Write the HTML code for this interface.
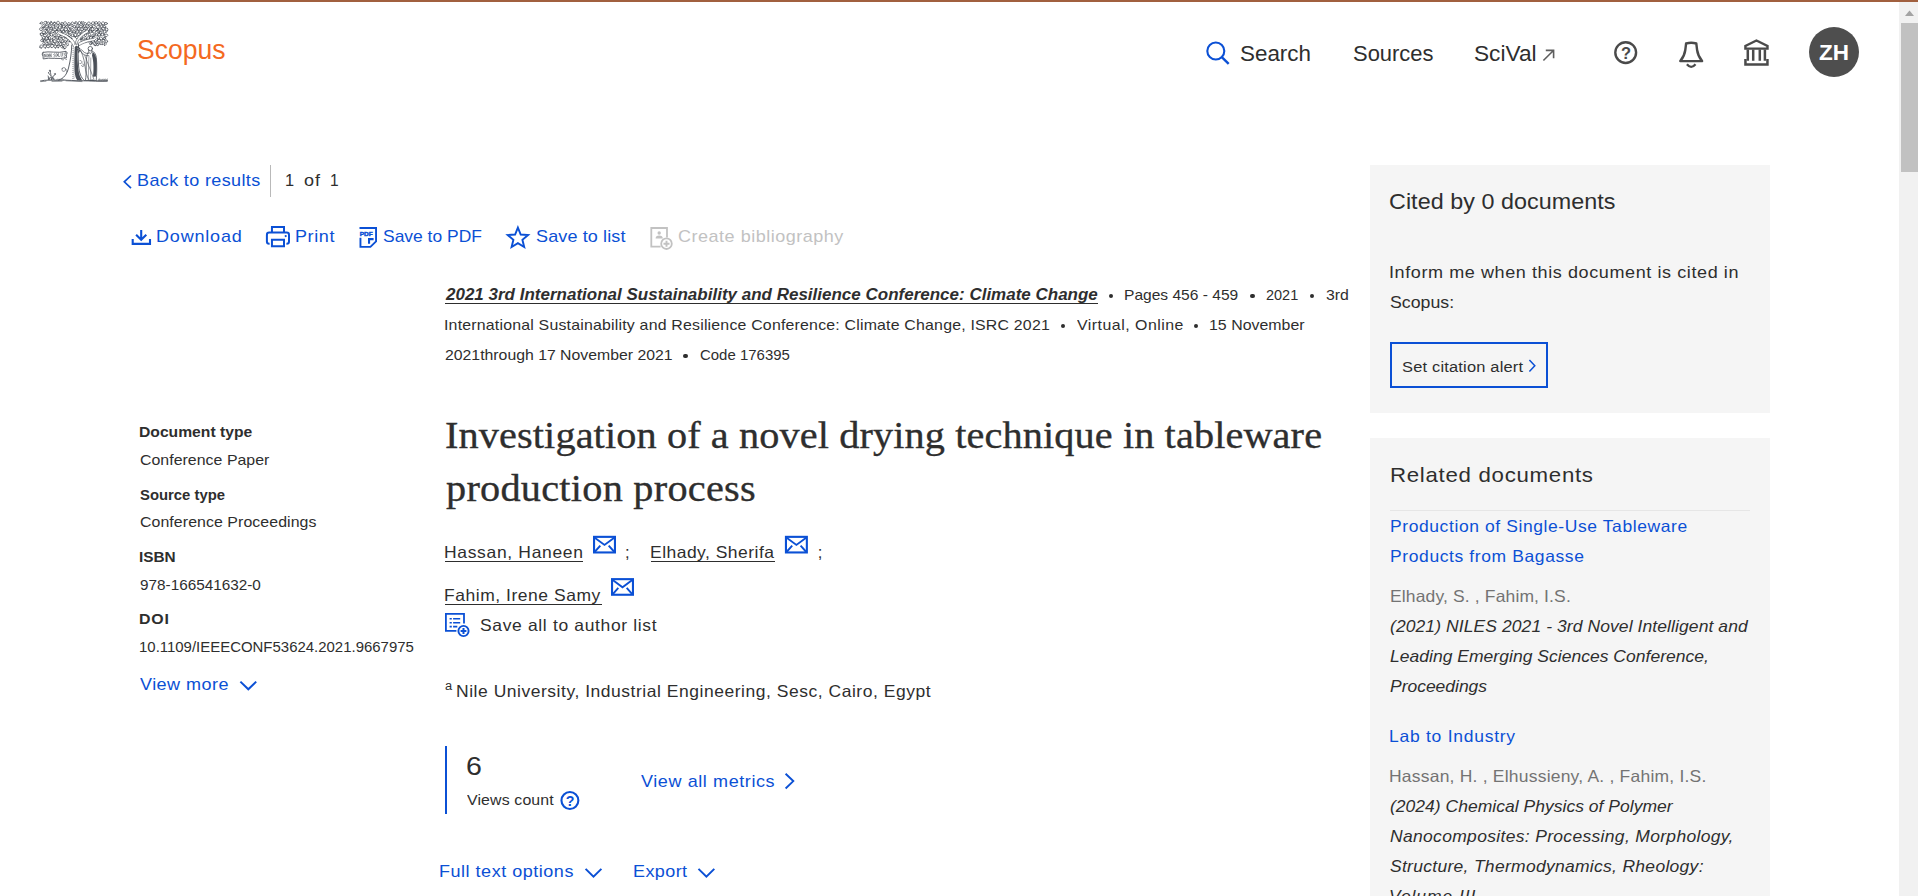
<!DOCTYPE html>
<html lang="en">
<head>
<meta charset="utf-8">
<title>Scopus - Document details</title>
<style>
html,body{margin:0;padding:0;background:#fff;}
body{width:1918px;height:896px;position:relative;overflow:hidden;font-family:"Liberation Sans",sans-serif;}
.t{position:absolute;white-space:pre;display:block;transform-origin:0 0;}
.s{font-family:"Liberation Sans",sans-serif;}
.sf{font-family:"Liberation Serif",serif;}
.b{position:absolute;display:block;}
svg{position:absolute;overflow:visible;}
.dot{position:absolute;width:4.4px;height:4.4px;border-radius:50%;background:#2e2e2e;}
.ul{position:absolute;height:1px;background:#2e2e2e;}
</style>
</head>
<body>
<!-- top accent bar -->
<div class="b" style="left:0;top:0;width:1918px;height:2px;background:#a1603f;"></div>

<!-- scrollbar -->
<div class="b" style="left:1899px;top:2px;width:19px;height:894px;background:#f1f1f1;"></div>
<div class="b" style="left:1901px;top:23px;width:17px;height:149px;background:#c1c1c1;"></div>
<svg style="left:1899px;top:2px" width="19" height="20" viewBox="0 0 19 20"><path d="M6 14 L10.5 8.6 L15 14 Z" fill="#a3a3a3"/></svg>

<!-- right panels -->
<div class="b" style="left:1370px;top:165px;width:400px;height:248px;background:#f5f5f5;"></div>
<div class="b" style="left:1370px;top:438px;width:400px;height:458px;background:#f5f5f5;"></div>
<div class="b" style="left:1390px;top:510px;width:360px;height:1px;background:#e6e6e6;"></div>
<div class="b" style="left:1390px;top:342px;width:154px;height:42px;border:2px solid #0b50d5;"></div>

<!-- back row divider -->
<div class="b" style="left:270px;top:165px;width:1px;height:32px;background:#b9b9b9;"></div>

<!-- metrics bar -->
<div class="b" style="left:445px;top:746px;width:2px;height:68px;background:#0b50d5;"></div>

<!-- underlines -->
<div class="ul" style="left:444.5px;top:302.7px;width:653.5px;height:1.4px;"></div>
<div class="ul" style="left:444.5px;top:561px;width:138.5px;"></div>
<div class="ul" style="left:650.7px;top:561px;width:124.6px;"></div>
<div class="ul" style="left:444.5px;top:604px;width:157px;"></div>

<!-- bullets -->
<div class="dot" style="left:1108.9px;top:293.7px;"></div>
<div class="dot" style="left:1250.4px;top:293.7px;"></div>
<div class="dot" style="left:1309.7px;top:293.7px;"></div>
<div class="dot" style="left:1061.0px;top:323.7px;"></div>
<div class="dot" style="left:1194.1px;top:323.7px;"></div>
<div class="dot" style="left:683.2px;top:353.6px;"></div>

<!-- avatar -->
<div class="b" style="left:1809px;top:27px;width:50px;height:50px;border-radius:50%;background:#4e4e4e;"></div>

<svg style="left:0;top:0" width="120" height="90" viewBox="0 0 120 90" fill="none" stroke="#4b5058" stroke-linecap="round" stroke-linejoin="round">
<ellipse cx="41.4" cy="23.0" rx="1.4" ry="1.0" transform="rotate(154 41.4 23.0)" stroke-width="0.66"/>
<ellipse cx="45.2" cy="22.9" rx="1.5" ry="1.3" transform="rotate(61 45.2 22.9)" stroke-width="0.66"/>
<ellipse cx="48.4" cy="23.2" rx="1.5" ry="1.2" transform="rotate(23 48.4 23.2)" stroke-width="0.66"/>
<path d="M47.2 22.2 l-1.0 -0.7" stroke-width="0.95"/>
<ellipse cx="51.3" cy="23.4" rx="1.5" ry="1.3" transform="rotate(55 51.3 23.4)" stroke-width="0.66"/>
<path d="M51.3 22.4 l-0.3 -1.1" stroke-width="0.95"/>
<ellipse cx="54.6" cy="23.3" rx="1.5" ry="1.3" transform="rotate(3 54.6 23.3)" stroke-width="0.66"/>
<path d="M53.7 23.2 l1.0 -0.9" stroke-width="0.95"/>
<ellipse cx="58.1" cy="22.9" rx="1.7" ry="1.4" transform="rotate(78 58.1 22.9)" stroke-width="0.66"/>
<ellipse cx="61.9" cy="23.8" rx="1.5" ry="1.3" transform="rotate(91 61.9 23.8)" stroke-width="0.66"/>
<ellipse cx="64.9" cy="23.1" rx="1.5" ry="1.3" transform="rotate(150 64.9 23.1)" stroke-width="0.66"/>
<ellipse cx="69.0" cy="23.9" rx="1.5" ry="1.1" transform="rotate(63 69.0 23.9)" stroke-width="0.66"/>
<path d="M67.6 24.7 l-0.5 -0.7" stroke-width="0.95"/>
<ellipse cx="72.3" cy="23.3" rx="1.4" ry="1.3" transform="rotate(151 72.3 23.3)" stroke-width="0.66"/>
<ellipse cx="76.2" cy="22.9" rx="1.5" ry="1.1" transform="rotate(44 76.2 22.9)" stroke-width="0.66"/>
<path d="M75.1 22.7 l-0.5 1.0" stroke-width="0.95"/>
<ellipse cx="79.4" cy="23.1" rx="1.7" ry="1.3" transform="rotate(98 79.4 23.1)" stroke-width="0.66"/>
<ellipse cx="82.0" cy="22.9" rx="1.5" ry="1.0" transform="rotate(64 82.0 22.9)" stroke-width="0.66"/>
<path d="M81.9 23.0 l-0.7 0.0" stroke-width="0.95"/>
<ellipse cx="85.6" cy="23.8" rx="1.4" ry="1.0" transform="rotate(48 85.6 23.8)" stroke-width="0.66"/>
<path d="M84.1 22.3 l-0.4 -0.6" stroke-width="0.95"/>
<ellipse cx="88.8" cy="23.5" rx="1.6" ry="1.4" transform="rotate(95 88.8 23.5)" stroke-width="0.66"/>
<ellipse cx="92.8" cy="23.2" rx="1.6" ry="1.3" transform="rotate(158 92.8 23.2)" stroke-width="0.66"/>
<path d="M94.3 22.1 l0.5 0.3" stroke-width="0.95"/>
<ellipse cx="96.1" cy="22.9" rx="1.4" ry="1.3" transform="rotate(150 96.1 22.9)" stroke-width="0.66"/>
<ellipse cx="98.9" cy="23.0" rx="1.6" ry="1.2" transform="rotate(146 98.9 23.0)" stroke-width="0.66"/>
<path d="M98.9 24.1 l0.7 0.7" stroke-width="0.95"/>
<ellipse cx="103.0" cy="23.3" rx="1.6" ry="1.4" transform="rotate(161 103.0 23.3)" stroke-width="0.66"/>
<ellipse cx="106.0" cy="23.5" rx="1.4" ry="1.1" transform="rotate(6 106.0 23.5)" stroke-width="0.66"/>
<path d="M104.7 24.6 l0.1 0.3" stroke-width="0.95"/>
<ellipse cx="43.2" cy="26.1" rx="1.6" ry="1.3" transform="rotate(123 43.2 26.1)" stroke-width="0.66"/>
<path d="M44.2 26.9 l0.0 0.1" stroke-width="0.95"/>
<ellipse cx="47.1" cy="26.5" rx="1.6" ry="1.4" transform="rotate(12 47.1 26.5)" stroke-width="0.66"/>
<path d="M45.7 25.8 l0.5 -0.6" stroke-width="0.95"/>
<ellipse cx="49.8" cy="26.4" rx="1.6" ry="1.4" transform="rotate(176 49.8 26.4)" stroke-width="0.66"/>
<path d="M49.7 27.0 l0.6 0.3" stroke-width="0.95"/>
<ellipse cx="53.5" cy="26.8" rx="1.6" ry="1.2" transform="rotate(14 53.5 26.8)" stroke-width="0.66"/>
<path d="M54.3 26.1 l0.1 -1.1" stroke-width="0.95"/>
<ellipse cx="57.2" cy="26.0" rx="1.4" ry="1.2" transform="rotate(48 57.2 26.0)" stroke-width="0.66"/>
<ellipse cx="60.9" cy="25.8" rx="1.6" ry="1.3" transform="rotate(52 60.9 25.8)" stroke-width="0.66"/>
<path d="M60.8 24.6 l0.9 -0.7" stroke-width="0.95"/>
<ellipse cx="63.6" cy="26.6" rx="1.7" ry="1.2" transform="rotate(169 63.6 26.6)" stroke-width="0.66"/>
<path d="M64.6 28.1 l-0.1 -0.5" stroke-width="0.95"/>
<ellipse cx="66.7" cy="26.3" rx="1.4" ry="1.1" transform="rotate(170 66.7 26.3)" stroke-width="0.66"/>
<path d="M65.5 26.4 l1.0 -0.8" stroke-width="0.95"/>
<ellipse cx="69.9" cy="26.5" rx="1.7" ry="1.5" transform="rotate(92 69.9 26.5)" stroke-width="0.66"/>
<ellipse cx="74.2" cy="26.4" rx="1.4" ry="1.2" transform="rotate(162 74.2 26.4)" stroke-width="0.66"/>
<path d="M72.6 26.4 l-0.1 -0.4" stroke-width="0.95"/>
<ellipse cx="77.8" cy="26.1" rx="1.4" ry="1.1" transform="rotate(62 77.8 26.1)" stroke-width="0.66"/>
<ellipse cx="80.9" cy="26.4" rx="1.4" ry="1.2" transform="rotate(135 80.9 26.4)" stroke-width="0.66"/>
<path d="M82.3 27.1 l0.9 -0.5" stroke-width="0.95"/>
<ellipse cx="84.2" cy="26.2" rx="1.5" ry="1.4" transform="rotate(71 84.2 26.2)" stroke-width="0.66"/>
<path d="M83.8 26.0 l-0.5 -1.0" stroke-width="0.95"/>
<ellipse cx="87.9" cy="26.8" rx="1.4" ry="1.1" transform="rotate(150 87.9 26.8)" stroke-width="0.66"/>
<ellipse cx="90.9" cy="26.5" rx="1.4" ry="1.2" transform="rotate(48 90.9 26.5)" stroke-width="0.66"/>
<path d="M90.5 28.0 l0.8 0.7" stroke-width="0.95"/>
<ellipse cx="93.8" cy="26.5" rx="1.6" ry="1.5" transform="rotate(164 93.8 26.5)" stroke-width="0.66"/>
<path d="M94.5 25.1 l0.5 -0.1" stroke-width="0.95"/>
<ellipse cx="97.9" cy="26.9" rx="1.7" ry="1.3" transform="rotate(116 97.9 26.9)" stroke-width="0.66"/>
<path d="M99.2 25.7 l-0.1 -0.3" stroke-width="0.95"/>
<ellipse cx="101.5" cy="26.0" rx="1.5" ry="1.4" transform="rotate(133 101.5 26.0)" stroke-width="0.66"/>
<path d="M102.0 25.4 l0.1 -0.2" stroke-width="0.95"/>
<ellipse cx="104.4" cy="26.5" rx="1.4" ry="1.1" transform="rotate(29 104.4 26.5)" stroke-width="0.66"/>
<ellipse cx="41.0" cy="29.2" rx="1.5" ry="1.4" transform="rotate(40 41.0 29.2)" stroke-width="0.66"/>
<ellipse cx="44.6" cy="28.7" rx="1.5" ry="1.1" transform="rotate(25 44.6 28.7)" stroke-width="0.66"/>
<path d="M44.1 27.4 l-0.6 -0.5" stroke-width="0.95"/>
<ellipse cx="47.9" cy="29.5" rx="1.6" ry="1.4" transform="rotate(160 47.9 29.5)" stroke-width="0.66"/>
<path d="M47.6 29.6 l-0.3 -0.4" stroke-width="0.95"/>
<ellipse cx="51.4" cy="28.9" rx="1.4" ry="1.3" transform="rotate(50 51.4 28.9)" stroke-width="0.66"/>
<path d="M51.4 29.3 l0.8 -0.6" stroke-width="0.95"/>
<ellipse cx="55.1" cy="29.6" rx="1.5" ry="1.2" transform="rotate(45 55.1 29.6)" stroke-width="0.66"/>
<path d="M56.5 30.8 l0.8 -1.1" stroke-width="0.95"/>
<ellipse cx="58.1" cy="29.1" rx="1.4" ry="1.3" transform="rotate(128 58.1 29.1)" stroke-width="0.66"/>
<path d="M58.4 27.5 l-0.2 0.9" stroke-width="0.95"/>
<ellipse cx="62.1" cy="29.7" rx="1.7" ry="1.6" transform="rotate(154 62.1 29.7)" stroke-width="0.66"/>
<path d="M60.8 28.6 l0.0 0.4" stroke-width="0.95"/>
<ellipse cx="65.8" cy="29.6" rx="1.7" ry="1.5" transform="rotate(130 65.8 29.6)" stroke-width="0.66"/>
<ellipse cx="68.5" cy="29.1" rx="1.5" ry="1.1" transform="rotate(99 68.5 29.1)" stroke-width="0.66"/>
<ellipse cx="72.0" cy="29.7" rx="1.4" ry="1.2" transform="rotate(166 72.0 29.7)" stroke-width="0.66"/>
<path d="M70.8 28.9 l0.3 0.4" stroke-width="0.95"/>
<ellipse cx="76.1" cy="28.8" rx="1.4" ry="1.2" transform="rotate(13 76.1 28.8)" stroke-width="0.66"/>
<path d="M75.8 27.9 l0.2 -1.1" stroke-width="0.95"/>
<ellipse cx="78.6" cy="28.9" rx="1.5" ry="1.4" transform="rotate(83 78.6 28.9)" stroke-width="0.66"/>
<ellipse cx="82.1" cy="29.2" rx="1.7" ry="1.3" transform="rotate(86 82.1 29.2)" stroke-width="0.66"/>
<path d="M83.6 29.8 l-0.4 -1.1" stroke-width="0.95"/>
<ellipse cx="85.9" cy="28.9" rx="1.5" ry="1.2" transform="rotate(121 85.9 28.9)" stroke-width="0.66"/>
<path d="M86.4 30.3 l-0.6 -1.0" stroke-width="0.95"/>
<ellipse cx="88.6" cy="29.1" rx="1.5" ry="1.3" transform="rotate(76 88.6 29.1)" stroke-width="0.66"/>
<path d="M89.6 29.9 l0.0 -0.6" stroke-width="0.95"/>
<ellipse cx="92.4" cy="29.3" rx="1.7" ry="1.6" transform="rotate(56 92.4 29.3)" stroke-width="0.66"/>
<path d="M91.6 30.1 l-0.5 1.0" stroke-width="0.95"/>
<ellipse cx="96.5" cy="29.4" rx="1.5" ry="1.2" transform="rotate(34 96.5 29.4)" stroke-width="0.66"/>
<path d="M97.1 30.9 l-0.8 -0.2" stroke-width="0.95"/>
<ellipse cx="99.4" cy="29.3" rx="1.4" ry="1.1" transform="rotate(175 99.4 29.3)" stroke-width="0.66"/>
<path d="M98.0 29.0 l0.9 0.8" stroke-width="0.95"/>
<ellipse cx="103.0" cy="28.7" rx="1.6" ry="1.5" transform="rotate(180 103.0 28.7)" stroke-width="0.66"/>
<path d="M102.0 30.1 l0.5 -1.0" stroke-width="0.95"/>
<ellipse cx="106.7" cy="29.5" rx="1.6" ry="1.3" transform="rotate(68 106.7 29.5)" stroke-width="0.66"/>
<path d="M105.6 27.9 l-0.5 -0.3" stroke-width="0.95"/>
<ellipse cx="43.7" cy="32.5" rx="1.7" ry="1.6" transform="rotate(22 43.7 32.5)" stroke-width="0.66"/>
<path d="M43.3 33.5 l0.7 -0.1" stroke-width="0.95"/>
<ellipse cx="46.6" cy="32.0" rx="1.4" ry="1.1" transform="rotate(85 46.6 32.0)" stroke-width="0.66"/>
<ellipse cx="49.6" cy="32.3" rx="1.4" ry="1.3" transform="rotate(66 49.6 32.3)" stroke-width="0.66"/>
<path d="M49.3 33.3 l0.6 -1.0" stroke-width="0.95"/>
<ellipse cx="53.0" cy="31.6" rx="1.4" ry="1.3" transform="rotate(11 53.0 31.6)" stroke-width="0.66"/>
<path d="M53.8 32.9 l-0.4 -0.5" stroke-width="0.95"/>
<ellipse cx="56.6" cy="31.7" rx="1.7" ry="1.3" transform="rotate(111 56.6 31.7)" stroke-width="0.66"/>
<ellipse cx="60.1" cy="31.6" rx="1.5" ry="1.0" transform="rotate(50 60.1 31.6)" stroke-width="0.66"/>
<ellipse cx="63.1" cy="31.7" rx="1.7" ry="1.6" transform="rotate(114 63.1 31.7)" stroke-width="0.66"/>
<path d="M62.2 31.6 l1.0 1.0" stroke-width="0.95"/>
<ellipse cx="66.6" cy="31.9" rx="1.5" ry="1.2" transform="rotate(45 66.6 31.9)" stroke-width="0.66"/>
<path d="M68.0 30.9 l0.7 0.5" stroke-width="0.95"/>
<ellipse cx="69.9" cy="32.5" rx="1.7" ry="1.4" transform="rotate(139 69.9 32.5)" stroke-width="0.66"/>
<path d="M69.4 32.1 l0.6 -0.9" stroke-width="0.95"/>
<ellipse cx="74.0" cy="31.7" rx="1.4" ry="1.1" transform="rotate(136 74.0 31.7)" stroke-width="0.66"/>
<path d="M72.5 31.8 l-0.4 1.1" stroke-width="0.95"/>
<ellipse cx="77.0" cy="31.9" rx="1.7" ry="1.3" transform="rotate(178 77.0 31.9)" stroke-width="0.66"/>
<path d="M75.7 31.9 l0.5 -0.1" stroke-width="0.95"/>
<ellipse cx="80.5" cy="31.6" rx="1.4" ry="1.2" transform="rotate(75 80.5 31.6)" stroke-width="0.66"/>
<ellipse cx="84.5" cy="32.7" rx="1.6" ry="1.4" transform="rotate(152 84.5 32.7)" stroke-width="0.66"/>
<path d="M85.6 32.0 l0.1 -0.3" stroke-width="0.95"/>
<ellipse cx="87.5" cy="32.1" rx="1.6" ry="1.3" transform="rotate(36 87.5 32.1)" stroke-width="0.66"/>
<path d="M86.3 33.3 l0.2 -0.4" stroke-width="0.95"/>
<ellipse cx="90.4" cy="31.6" rx="1.5" ry="1.2" transform="rotate(179 90.4 31.6)" stroke-width="0.66"/>
<path d="M91.4 32.1 l1.1 -0.9" stroke-width="0.95"/>
<ellipse cx="94.1" cy="31.8" rx="1.5" ry="1.4" transform="rotate(147 94.1 31.8)" stroke-width="0.66"/>
<ellipse cx="98.1" cy="31.7" rx="1.4" ry="1.0" transform="rotate(53 98.1 31.7)" stroke-width="0.66"/>
<path d="M99.6 32.0 l0.9 -0.3" stroke-width="0.95"/>
<ellipse cx="100.5" cy="32.6" rx="1.7" ry="1.3" transform="rotate(81 100.5 32.6)" stroke-width="0.66"/>
<ellipse cx="104.5" cy="31.7" rx="1.7" ry="1.5" transform="rotate(19 104.5 31.7)" stroke-width="0.66"/>
<path d="M103.6 31.3 l-0.8 -0.7" stroke-width="0.95"/>
<ellipse cx="41.7" cy="34.4" rx="1.5" ry="1.3" transform="rotate(108 41.7 34.4)" stroke-width="0.66"/>
<path d="M40.1 33.9 l0.4 -0.7" stroke-width="0.95"/>
<ellipse cx="45.0" cy="35.6" rx="1.5" ry="1.3" transform="rotate(37 45.0 35.6)" stroke-width="0.66"/>
<path d="M43.6 34.3 l-0.2 0.1" stroke-width="0.95"/>
<ellipse cx="48.8" cy="35.2" rx="1.6" ry="1.2" transform="rotate(16 48.8 35.2)" stroke-width="0.66"/>
<ellipse cx="51.5" cy="34.8" rx="1.5" ry="1.2" transform="rotate(51 51.5 34.8)" stroke-width="0.66"/>
<ellipse cx="54.8" cy="35.3" rx="1.5" ry="1.2" transform="rotate(102 54.8 35.3)" stroke-width="0.66"/>
<path d="M56.0 36.9 l-0.3 -0.7" stroke-width="0.95"/>
<ellipse cx="58.6" cy="35.3" rx="1.6" ry="1.2" transform="rotate(37 58.6 35.3)" stroke-width="0.66"/>
<ellipse cx="61.8" cy="34.7" rx="1.5" ry="1.2" transform="rotate(148 61.8 34.7)" stroke-width="0.66"/>
<ellipse cx="65.8" cy="35.6" rx="1.5" ry="1.1" transform="rotate(29 65.8 35.6)" stroke-width="0.66"/>
<path d="M66.2 36.9 l-0.9 0.3" stroke-width="0.95"/>
<ellipse cx="69.2" cy="35.4" rx="1.5" ry="1.1" transform="rotate(91 69.2 35.4)" stroke-width="0.66"/>
<path d="M69.3 36.7 l-0.9 -0.0" stroke-width="0.95"/>
<ellipse cx="72.6" cy="35.3" rx="1.7" ry="1.3" transform="rotate(174 72.6 35.3)" stroke-width="0.66"/>
<path d="M74.0 36.8 l-0.0 -1.0" stroke-width="0.95"/>
<ellipse cx="75.3" cy="35.0" rx="1.7" ry="1.6" transform="rotate(70 75.3 35.0)" stroke-width="0.66"/>
<ellipse cx="78.8" cy="34.4" rx="1.7" ry="1.5" transform="rotate(29 78.8 34.4)" stroke-width="0.66"/>
<path d="M78.5 35.5 l0.7 -0.7" stroke-width="0.95"/>
<ellipse cx="81.8" cy="34.7" rx="1.4" ry="1.2" transform="rotate(72 81.8 34.7)" stroke-width="0.66"/>
<path d="M80.6 33.9 l0.5 0.9" stroke-width="0.95"/>
<ellipse cx="85.5" cy="35.2" rx="1.4" ry="1.2" transform="rotate(101 85.5 35.2)" stroke-width="0.66"/>
<path d="M86.6 34.0 l0.2 0.1" stroke-width="0.95"/>
<ellipse cx="89.7" cy="34.9" rx="1.6" ry="1.3" transform="rotate(55 89.7 34.9)" stroke-width="0.66"/>
<path d="M89.5 35.4 l-0.1 -0.1" stroke-width="0.95"/>
<ellipse cx="93.1" cy="35.6" rx="1.4" ry="1.1" transform="rotate(111 93.1 35.6)" stroke-width="0.66"/>
<path d="M94.0 36.5 l-0.1 -0.7" stroke-width="0.95"/>
<ellipse cx="96.5" cy="34.8" rx="1.5" ry="1.1" transform="rotate(19 96.5 34.8)" stroke-width="0.66"/>
<path d="M95.2 34.7 l0.0 -1.0" stroke-width="0.95"/>
<ellipse cx="99.1" cy="34.7" rx="1.6" ry="1.4" transform="rotate(15 99.1 34.7)" stroke-width="0.66"/>
<ellipse cx="102.4" cy="34.6" rx="1.6" ry="1.3" transform="rotate(10 102.4 34.6)" stroke-width="0.66"/>
<path d="M103.9 33.5 l0.8 1.1" stroke-width="0.95"/>
<ellipse cx="106.3" cy="35.5" rx="1.6" ry="1.2" transform="rotate(147 106.3 35.5)" stroke-width="0.66"/>
<ellipse cx="43.7" cy="37.9" rx="1.5" ry="1.4" transform="rotate(172 43.7 37.9)" stroke-width="0.66"/>
<path d="M44.6 39.3 l-1.0 -0.3" stroke-width="0.95"/>
<ellipse cx="46.9" cy="38.3" rx="1.7" ry="1.5" transform="rotate(29 46.9 38.3)" stroke-width="0.66"/>
<path d="M47.9 37.1 l0.0 0.9" stroke-width="0.95"/>
<ellipse cx="49.6" cy="38.1" rx="1.4" ry="1.2" transform="rotate(47 49.6 38.1)" stroke-width="0.66"/>
<path d="M48.1 37.1 l-0.7 1.0" stroke-width="0.95"/>
<ellipse cx="54.0" cy="38.2" rx="1.6" ry="1.2" transform="rotate(161 54.0 38.2)" stroke-width="0.66"/>
<ellipse cx="57.2" cy="37.9" rx="1.4" ry="1.2" transform="rotate(96 57.2 37.9)" stroke-width="0.66"/>
<path d="M58.4 38.1 l0.2 0.8" stroke-width="0.95"/>
<ellipse cx="59.9" cy="38.2" rx="1.4" ry="1.2" transform="rotate(179 59.9 38.2)" stroke-width="0.66"/>
<path d="M60.9 37.5 l1.1 0.2" stroke-width="0.95"/>
<ellipse cx="63.5" cy="38.3" rx="1.5" ry="1.2" transform="rotate(138 63.5 38.3)" stroke-width="0.66"/>
<path d="M64.3 36.8 l0.7 -0.5" stroke-width="0.95"/>
<ellipse cx="67.7" cy="37.8" rx="1.6" ry="1.4" transform="rotate(177 67.7 37.8)" stroke-width="0.66"/>
<ellipse cx="70.4" cy="38.4" rx="1.5" ry="1.0" transform="rotate(0 70.4 38.4)" stroke-width="0.66"/>
<path d="M70.8 38.2 l0.0 0.9" stroke-width="0.95"/>
<ellipse cx="76.9" cy="37.5" rx="1.4" ry="1.2" transform="rotate(41 76.9 37.5)" stroke-width="0.66"/>
<path d="M75.3 37.0 l-0.9 -0.3" stroke-width="0.95"/>
<ellipse cx="81.2" cy="38.3" rx="1.4" ry="1.2" transform="rotate(105 81.2 38.3)" stroke-width="0.66"/>
<path d="M81.6 38.2 l-0.8 1.0" stroke-width="0.95"/>
<ellipse cx="83.7" cy="38.3" rx="1.4" ry="1.0" transform="rotate(27 83.7 38.3)" stroke-width="0.66"/>
<ellipse cx="88.1" cy="38.1" rx="1.7" ry="1.4" transform="rotate(141 88.1 38.1)" stroke-width="0.66"/>
<path d="M86.5 38.6 l0.1 -0.3" stroke-width="0.95"/>
<ellipse cx="90.7" cy="38.0" rx="1.6" ry="1.5" transform="rotate(80 90.7 38.0)" stroke-width="0.66"/>
<ellipse cx="93.9" cy="37.3" rx="1.4" ry="1.0" transform="rotate(163 93.9 37.3)" stroke-width="0.66"/>
<path d="M93.6 36.5 l-1.0 0.6" stroke-width="0.95"/>
<ellipse cx="98.3" cy="38.1" rx="1.4" ry="1.3" transform="rotate(99 98.3 38.1)" stroke-width="0.66"/>
<path d="M97.3 38.4 l0.0 0.3" stroke-width="0.95"/>
<ellipse cx="101.1" cy="38.4" rx="1.7" ry="1.3" transform="rotate(31 101.1 38.4)" stroke-width="0.66"/>
<path d="M99.7 39.7 l0.6 0.5" stroke-width="0.95"/>
<ellipse cx="104.4" cy="38.3" rx="1.4" ry="1.2" transform="rotate(152 104.4 38.3)" stroke-width="0.66"/>
<path d="M105.2 38.2 l-0.6 -0.9" stroke-width="0.95"/>
<ellipse cx="42.0" cy="40.5" rx="1.4" ry="1.1" transform="rotate(7 42.0 40.5)" stroke-width="0.66"/>
<ellipse cx="44.7" cy="40.6" rx="1.6" ry="1.4" transform="rotate(152 44.7 40.6)" stroke-width="0.66"/>
<path d="M44.9 40.3 l0.6 0.1" stroke-width="0.95"/>
<ellipse cx="48.1" cy="40.9" rx="1.5" ry="1.4" transform="rotate(116 48.1 40.9)" stroke-width="0.66"/>
<path d="M49.3 39.4 l-0.5 -0.6" stroke-width="0.95"/>
<ellipse cx="51.5" cy="40.7" rx="1.6" ry="1.5" transform="rotate(170 51.5 40.7)" stroke-width="0.66"/>
<path d="M52.7 40.2 l-0.6 0.9" stroke-width="0.95"/>
<ellipse cx="54.8" cy="41.3" rx="1.6" ry="1.4" transform="rotate(125 54.8 41.3)" stroke-width="0.66"/>
<ellipse cx="58.4" cy="40.7" rx="1.5" ry="1.3" transform="rotate(151 58.4 40.7)" stroke-width="0.66"/>
<ellipse cx="62.1" cy="41.3" rx="1.5" ry="1.3" transform="rotate(130 62.1 41.3)" stroke-width="0.66"/>
<path d="M61.2 41.7 l-0.9 0.9" stroke-width="0.95"/>
<ellipse cx="65.3" cy="41.3" rx="1.4" ry="1.0" transform="rotate(5 65.3 41.3)" stroke-width="0.66"/>
<ellipse cx="68.8" cy="40.8" rx="1.5" ry="1.1" transform="rotate(26 68.8 40.8)" stroke-width="0.66"/>
<path d="M69.4 41.3 l0.4 0.5" stroke-width="0.95"/>
<ellipse cx="82.0" cy="40.8" rx="1.4" ry="1.1" transform="rotate(106 82.0 40.8)" stroke-width="0.66"/>
<ellipse cx="86.1" cy="40.9" rx="1.7" ry="1.2" transform="rotate(160 86.1 40.9)" stroke-width="0.66"/>
<ellipse cx="89.0" cy="40.8" rx="1.7" ry="1.2" transform="rotate(170 89.0 40.8)" stroke-width="0.66"/>
<path d="M87.7 39.3 l0.8 0.7" stroke-width="0.95"/>
<ellipse cx="92.7" cy="41.1" rx="1.6" ry="1.4" transform="rotate(149 92.7 41.1)" stroke-width="0.66"/>
<path d="M91.4 39.9 l0.6 -0.6" stroke-width="0.95"/>
<ellipse cx="95.5" cy="40.9" rx="1.5" ry="1.0" transform="rotate(76 95.5 40.9)" stroke-width="0.66"/>
<path d="M94.8 41.6 l-0.3 -0.4" stroke-width="0.95"/>
<ellipse cx="99.1" cy="40.5" rx="1.7" ry="1.6" transform="rotate(91 99.1 40.5)" stroke-width="0.66"/>
<path d="M97.6 40.3 l-0.1 0.6" stroke-width="0.95"/>
<ellipse cx="103.1" cy="40.8" rx="1.5" ry="1.2" transform="rotate(127 103.1 40.8)" stroke-width="0.66"/>
<path d="M104.3 39.5 l0.7 -0.7" stroke-width="0.95"/>
<ellipse cx="106.3" cy="41.1" rx="1.4" ry="1.2" transform="rotate(36 106.3 41.1)" stroke-width="0.66"/>
<ellipse cx="43.8" cy="43.6" rx="1.4" ry="1.1" transform="rotate(88 43.8 43.6)" stroke-width="0.66"/>
<ellipse cx="46.8" cy="43.7" rx="1.4" ry="1.1" transform="rotate(89 46.8 43.7)" stroke-width="0.66"/>
<ellipse cx="50.1" cy="43.9" rx="1.5" ry="1.1" transform="rotate(170 50.1 43.9)" stroke-width="0.66"/>
<path d="M50.8 43.9 l-0.9 0.3" stroke-width="0.95"/>
<ellipse cx="53.4" cy="43.7" rx="1.4" ry="1.2" transform="rotate(142 53.4 43.7)" stroke-width="0.66"/>
<ellipse cx="56.9" cy="44.2" rx="1.6" ry="1.3" transform="rotate(64 56.9 44.2)" stroke-width="0.66"/>
<path d="M58.1 42.9 l0.9 -1.0" stroke-width="0.95"/>
<ellipse cx="60.5" cy="44.2" rx="1.4" ry="1.3" transform="rotate(47 60.5 44.2)" stroke-width="0.66"/>
<path d="M60.2 45.4 l-0.6 -0.1" stroke-width="0.95"/>
<ellipse cx="64.2" cy="43.4" rx="1.6" ry="1.4" transform="rotate(136 64.2 43.4)" stroke-width="0.66"/>
<ellipse cx="67.2" cy="44.2" rx="1.5" ry="1.1" transform="rotate(59 67.2 44.2)" stroke-width="0.66"/>
<ellipse cx="91.1" cy="43.3" rx="1.6" ry="1.2" transform="rotate(134 91.1 43.3)" stroke-width="0.66"/>
<path d="M92.0 43.5 l-0.8 -0.1" stroke-width="0.95"/>
<ellipse cx="94.8" cy="44.3" rx="1.7" ry="1.3" transform="rotate(43 94.8 44.3)" stroke-width="0.66"/>
<path d="M95.4 45.4 l-0.8 -0.8" stroke-width="0.95"/>
<ellipse cx="97.4" cy="44.2" rx="1.4" ry="1.2" transform="rotate(59 97.4 44.2)" stroke-width="0.66"/>
<path d="M96.8 43.2 l1.0 0.5" stroke-width="0.95"/>
<ellipse cx="101.0" cy="43.7" rx="1.4" ry="1.0" transform="rotate(173 101.0 43.7)" stroke-width="0.66"/>
<path d="M102.5 44.6 l0.5 -0.1" stroke-width="0.95"/>
<ellipse cx="105.1" cy="44.1" rx="1.4" ry="1.0" transform="rotate(115 105.1 44.1)" stroke-width="0.66"/>
<path d="M104.7 42.6 l-0.2 0.6" stroke-width="0.95"/>
<ellipse cx="41.2" cy="46.5" rx="1.6" ry="1.4" transform="rotate(90 41.2 46.5)" stroke-width="0.66"/>
<path d="M40.0 46.8 l-0.2 0.5" stroke-width="0.95"/>
<ellipse cx="45.0" cy="46.4" rx="1.7" ry="1.4" transform="rotate(77 45.0 46.4)" stroke-width="0.66"/>
<ellipse cx="48.0" cy="46.4" rx="1.5" ry="1.3" transform="rotate(41 48.0 46.4)" stroke-width="0.66"/>
<ellipse cx="52.1" cy="46.0" rx="1.7" ry="1.5" transform="rotate(126 52.1 46.0)" stroke-width="0.66"/>
<ellipse cx="55.3" cy="46.5" rx="1.6" ry="1.3" transform="rotate(82 55.3 46.5)" stroke-width="0.66"/>
<ellipse cx="58.0" cy="46.4" rx="1.4" ry="1.2" transform="rotate(76 58.0 46.4)" stroke-width="0.66"/>
<ellipse cx="62.1" cy="46.6" rx="1.6" ry="1.3" transform="rotate(45 62.1 46.6)" stroke-width="0.66"/>
<path d="M62.5 46.3 l0.4 0.9" stroke-width="0.95"/>
<ellipse cx="64.9" cy="47.2" rx="1.4" ry="1.3" transform="rotate(118 64.9 47.2)" stroke-width="0.66"/>
<path d="M64.8 48.7 l-1.0 0.1" stroke-width="0.95"/>
<path d="M74.6 47 C73 41 68 36 60 33.5 M75.4 46 C76.4 40 80 35 87 31.5 M76.8 46 C80 42.6 86 40.6 94 39.4" stroke="#fff" stroke-width="2.2"/>
<path d="M73.6 47 C72 42 67 37.4 59.6 34.8 M75.4 44 C74 39.6 69 35.2 61 32.4 M74.8 44.6 C75.6 39.6 79.2 34.4 86 30.6 M76.6 44.6 C77.4 40.6 81 36.4 87.8 32.6 M77 44.4 C80 41.2 86 39.2 93.6 38.4 M78 46.6 C81 43.8 87 41.8 94.6 40.6" stroke-width="0.6"/>
<path d="M71.8 45 C71.5 52 70.6 60 68.5 68 C67 74 64 78.5 58.5 80.2" stroke-width="0.9"/>
<path d="M78.6 44 C78 50 78 58 78.6 66 C79.2 73 81 78 84.5 80.6" stroke-width="0.9"/>
<path d="M75 47 C74.4 55 74.3 64 74.6 71 C74.9 75.5 75.8 78.6 77.4 80.4 L82.6 80.4 C80 78 78.6 73 78 66 C77.4 58 77.3 51 77.7 46.5 C77 45.2 75.6 45.4 75 47 Z" fill="#4b5058" stroke="none"/>
<path d="M74.40 48.00 l-1.6 0.5" stroke-width="0.5"/>
<path d="M74.39 50.00 l-1.6 0.5" stroke-width="0.5"/>
<path d="M74.38 52.00 l-1.6 0.5" stroke-width="0.5"/>
<path d="M74.37 54.00 l-1.6 0.5" stroke-width="0.5"/>
<path d="M74.36 56.00 l-1.6 0.5" stroke-width="0.5"/>
<path d="M74.35 58.00 l-1.6 0.5" stroke-width="0.5"/>
<path d="M74.34 60.00 l-1.6 0.5" stroke-width="0.5"/>
<path d="M74.33 62.00 l-1.6 0.5" stroke-width="0.5"/>
<path d="M74.32 64.00 l-1.6 0.5" stroke-width="0.5"/>
<path d="M74.31 66.00 l-1.6 0.5" stroke-width="0.5"/>
<path d="M74.30 68.00 l-1.6 0.5" stroke-width="0.5"/>
<path d="M74.29 70.00 l-1.6 0.5" stroke-width="0.5"/>
<path d="M74.28 72.00 l-1.6 0.5" stroke-width="0.5"/>
<path d="M74.27 74.00 l-1.6 0.5" stroke-width="0.5"/>
<path d="M74.26 76.00 l-1.6 0.5" stroke-width="0.5"/>
<path d="M74.25 78.00 l-1.6 0.5" stroke-width="0.5"/>
<path d="M78.5 47 C82 52 84 58 85 66 C85.6 71 86.5 76 89 80" stroke-width="0.7"/>
<path d="M80 60.5 a1.6 1.6 0 1 1 -0.3 3 M81.5 65.5 a1.3 1.3 0 1 0 1.2 -1.6" stroke-width="0.6"/>
<circle cx="78.2" cy="47.2" r="0.9" fill="#4b5058" stroke="none"/>
<circle cx="79.4" cy="48.6" r="0.9" fill="#4b5058" stroke="none"/>
<circle cx="77.6" cy="49.6" r="0.9" fill="#4b5058" stroke="none"/>
<circle cx="79.6" cy="50.6" r="0.9" fill="#4b5058" stroke="none"/>
<circle cx="78.6" cy="51.8" r="0.9" fill="#4b5058" stroke="none"/>
<circle cx="90.3" cy="48.6" r="2.2" stroke-width="0.8"/>
<path d="M88.6 49.6 C88.3 51.5 89 53.2 90.4 53.8 C91.6 53 92 51 91.8 49.8" stroke-width="0.7"/>
<path d="M88.2 52.2 C86.6 55 86 60 86.2 66 C86.3 72 86 77 85.4 80.6 L96.2 80.8 C96.9 74 97 64 96.3 57.5 C95.8 54 94.2 51.6 92.2 51" stroke-width="0.8"/>
<path d="M92.6 52 C95.2 53.5 96.4 57 96.7 62 C96.9 68 96.6 73 96 76.4 L93 76.8 C93.8 70 93.8 61 92 55.5 Z" fill="#4b5058" stroke="none"/>
<path d="M89 56 C88.4 63 88.6 72 88.2 80 M90.8 58 C90.6 66 90.8 74 90.6 80.4" stroke-width="0.5"/>
<path d="M88.4 53.6 C85.6 53.8 83.2 52 81.4 49.6 M88.4 55.6 C85.4 56 82.6 54.2 80.6 51.2" stroke-width="0.75"/>
<path d="M84.8 55.5 L94 79.5" stroke-width="0.6"/>
<path d="M90 80.6 c1.2 -1.2 3.4 -1.2 4.4 0.2 z" fill="#4b5058" stroke-width="0.5"/>
<path d="M43.2 52.3 C49 50.8 58 53.6 65.8 51.4 L66.6 57.6 C58.6 59.8 49.6 57 43.6 58.8 Z" stroke-width="0.85"/>
<path d="M43.2 52.3 C42 53 41.8 54.8 42.6 55.6 M65.8 51.4 C67.2 51.6 67.6 53 67 54" stroke-width="0.7"/>
<path d="M44.60 57.20 V54.00 L46.10 57.20 V54.00" stroke-width="0.55"/>
<ellipse cx="47.95" cy="55.45" rx="0.8" ry="1.6" stroke-width="0.55"/>
<path d="M49.70 56.90 V53.70 L51.20 56.90 V53.70" stroke-width="0.55"/>
<path d="M54.75 53.75 c-1.6 -0.4 -1.4 1.6 -0.2 1.6 c1.2 0.2 1.2 1.8 -0.6 1.5" stroke-width="0.55"/>
<ellipse cx="56.70" cy="55.00" rx="0.8" ry="1.6" stroke-width="0.55"/>
<path d="M58.45 53.25 V56.45 H59.75" stroke-width="0.55"/>
<path d="M61.00 53.10 V55.50 c0 1.2 1.5 1.2 1.5 0 V53.10" stroke-width="0.55"/>
<path d="M64.95 53.15 c-1.6 -0.4 -1.4 1.6 -0.2 1.6 c1.2 0.2 1.2 1.8 -0.6 1.5" stroke-width="0.55"/>
<path d="M61 58.6 c0.4 1.2 1.6 1.6 2.6 1.2 M64.6 58 c0.2 1 1 1.6 2 1.4" stroke-width="0.6"/>
<path d="M40.4 81 C46 79.4 52 80.6 58 80.2 C66 79.6 76 81.2 86 80.8 C94 80.4 101 81.4 107.6 80.8" stroke-width="0.9"/>
<path d="M41 81.6 L46 81.2 M52 81.4 L62 81.2 M66 80.8 L82 81.6 M96 81.4 L107 81.4" stroke-width="0.6"/>
<path d="M98.00 80.8 l0.3 -0.99" stroke-width="0.45"/>
<path d="M98.70 80.8 l0.3 -1.74" stroke-width="0.45"/>
<path d="M99.40 80.8 l0.3 -1.93" stroke-width="0.45"/>
<path d="M100.10 80.8 l0.3 -1.42" stroke-width="0.45"/>
<path d="M100.80 80.8 l0.3 -0.92" stroke-width="0.45"/>
<path d="M101.50 80.8 l0.3 -1.49" stroke-width="0.45"/>
<path d="M102.20 80.8 l0.3 -1.45" stroke-width="0.45"/>
<path d="M102.90 80.8 l0.3 -1.66" stroke-width="0.45"/>
<path d="M103.60 80.8 l0.3 -1.41" stroke-width="0.45"/>
<path d="M104.30 80.8 l0.3 -1.57" stroke-width="0.45"/>
<path d="M105.00 80.8 l0.3 -1.79" stroke-width="0.45"/>
<path d="M105.70 80.8 l0.3 -1.43" stroke-width="0.45"/>
<path d="M106.40 80.8 l0.3 -1.29" stroke-width="0.45"/>
<path d="M107.10 80.8 l0.3 -1.94" stroke-width="0.45"/>
<path d="M56.00 80.3 l0.4 -0.81" stroke-width="0.45"/>
<path d="M57.20 80.3 l0.4 -1.28" stroke-width="0.45"/>
<path d="M58.40 80.3 l0.4 -0.99" stroke-width="0.45"/>
<path d="M59.60 80.3 l0.4 -1.36" stroke-width="0.45"/>
<path d="M60.80 80.3 l0.4 -0.72" stroke-width="0.45"/>
<path d="M62.00 80.3 l0.4 -1.58" stroke-width="0.45"/>
<path d="M63.20 80.3 l0.4 -0.96" stroke-width="0.45"/>
<path d="M64.40 80.3 l0.4 -0.66" stroke-width="0.45"/>
<path d="M51.6 79.6 C51.2 76 50.6 73 50 70.4 M51.6 79.6 C52.6 76.6 54 75 55.4 74.2 M50.8 75.4 C49.4 74.6 48.6 73.6 48.4 72.4 M51.2 77.4 C49.6 77.6 48.6 78.4 48.2 79.6" stroke-width="0.8"/>
<path d="M49.4 70.2 c0.8 -0.8 1.6 0.2 0.8 1.6 z M54.6 73.4 c1.2 -0.4 1.6 0.8 0.4 1.4 z M48 76 l0.6 3.6 l1.4 0 z M52.6 77 l0.2 2.6 l1.6 0 z" fill="#4b5058" stroke-width="0.4"/>
<path d="M62.4 68.2 c1.2 -1.2 3 -0.6 3.2 1 c0.2 1.6 -1.4 2.6 -2.8 2 c-1 -0.6 -1.2 -2 -0.4 -3 z M65.6 69.2 l1.6 1.2 l-0.6 1.8" stroke-width="0.65"/>
</svg>

<svg style="left:0;top:0" width="1918" height="896" viewBox="0 0 1918 896" fill="none" stroke-linejoin="miter">
<!-- search -->
<g stroke="#0b50d5" stroke-width="2.1">
<circle cx="1215.8" cy="51" r="8.5"/>
<path d="M1221.8 57.2 L1228.7 63.9" stroke-width="2.4"/>
</g>
<!-- scival arrow -->
<path d="M1543.4 60.5 L1553.2 50.7 M1545.8 50.4 H1553.6 V58.2" stroke="#5e5e5e" stroke-width="1.6"/>
<!-- help -->
<circle cx="1625.7" cy="52.6" r="10.4" stroke="#4a4a4a" stroke-width="2.4"/>
<text x="1626" y="58.8" text-anchor="middle" font-family="Liberation Sans" font-weight="bold" font-size="16.5" fill="#4a4a4a">?</text>
<!-- bell -->
<g stroke="#4a4a4a" stroke-width="2.4" stroke-linejoin="round">
<path d="M1680.3 61.1 C1682.8 58 1684.7 55 1685.3 50 C1685.7 47 1685.9 45 1686.1 43.5 Q1691.2 42.1 1696.3 43.5 C1696.5 45 1696.7 47 1697.1 50 C1697.7 55 1699.6 58 1702.1 61.1 Z"/>
<path d="M1686.9 64.2 Q1691.2 69.4 1695.5 64.2" stroke-width="2.3"/>
</g>
<!-- institution -->
<g stroke="#4a4a4a" stroke-width="2.4">
<path d="M1745.4 48.6 V45.9 L1756.45 40.5 L1767.5 45.9 V48.6 Z"/>
<path d="M1747.8 49.6 V60.8 M1753.2 49.6 V60.8 M1759.8 49.6 V60.8 M1764.9 49.6 V60.8" stroke-width="2.5"/>
<path d="M1745.45 58.9 V64.45 H1767.45 V58.9" stroke-width="2.5"/>
</g>
<!-- back chevron -->
<path d="M131 175.5 L124.3 181.8 L131 188.1" stroke="#0b50d5" stroke-width="1.7"/>
<!-- download -->
<g stroke="#0b50d5" stroke-width="2.1">
<path d="M141.2 229.9 V239.6 M136.1 234.7 L141.2 239.7 L146.3 234.7"/>
<path d="M132.7 239.1 V243.85 H150 V239.1"/>
</g>
<!-- print -->
<g stroke="#0b50d5" stroke-width="2">
<path d="M271.95 232.4 V227.1 H284 V232.4"/>
<path d="M269.6 243.7 H269.2 Q266.9 243.7 266.9 241.4 V234.9 Q266.9 232.6 269.2 232.6 H286.7 Q289 232.6 289 234.9 V241.4 Q289 243.7 286.7 243.7 H286.4"/>
<path d="M271.95 239.8 H284 V246.2 H271.95 Z"/>
</g>
<circle cx="285.7" cy="236.1" r="1.1" fill="#0b50d5"/>
<!-- pdf -->
<g stroke="#0b50d5" stroke-width="1.9">
<path d="M360.45 237.8 V246.9 H370.4 L376.05 241.4 V227.95 H359.5"/>
<path d="M369.05 243.8 V239.1 H373.6" stroke-width="2.1"/>
</g>
<text x="359.7" y="235.6" font-family="Liberation Sans" font-weight="bold" font-size="6" fill="#0b50d5" stroke="#0b50d5" stroke-width="0.45" textLength="13" lengthAdjust="spacingAndGlyphs">PDF</text>
<!-- star -->
<path d="M517.9 227.6 L520.7 234.5 L528.1 235.0 L522.4 239.8 L524.2 247.0 L517.9 243.1 L511.6 247.0 L513.4 239.8 L507.7 235.0 L515.1 234.5 Z" stroke="#0b50d5" stroke-width="1.9" stroke-linejoin="miter"/>
<!-- bibliography (disabled) -->
<g stroke="#c2c2c2" stroke-width="1.8">
<path d="M660.6 246.7 H651.3 V228 H667 V237.6"/>
<circle cx="666.5" cy="243.7" r="5.3"/>
<path d="M666.5 240.7 V246.7 M663.5 243.7 H669.5" stroke-width="1.9"/>
</g>
<circle cx="659.2" cy="233" r="1.7" fill="#c2c2c2"/>
<path d="M655.6 238.6 Q655.6 235.6 659.2 235.6 Q662.8 235.6 662.8 238.6 Z" fill="#c2c2c2"/>
<!-- mail icons -->
<g stroke="#0b50d5" stroke-width="2">
<g id="mail1"><rect x="594.05" y="536.85" width="20.9" height="15.6" stroke-width="2.1"/><path d="M594.4 537.4 L604.5 544.9 L614.6 537.4 M594.6 552 L600.3 545.6 M614.4 552 L608.7 545.6" stroke-width="1.9"/></g>
<g transform="translate(191.9 0)"><rect x="594.05" y="536.85" width="20.9" height="15.6" stroke-width="2.1"/><path d="M594.4 537.4 L604.5 544.9 L614.6 537.4 M594.6 552 L600.3 545.6 M614.4 552 L608.7 545.6" stroke-width="1.9"/></g>
<g transform="translate(18 42.3)"><rect x="594.05" y="536.85" width="20.9" height="15.6" stroke-width="2.1"/><path d="M594.4 537.4 L604.5 544.9 L614.6 537.4 M594.6 552 L600.3 545.6 M614.4 552 L608.7 545.6" stroke-width="1.9"/></g>
</g>
<!-- save all to author list -->
<g stroke="#0b50d5" stroke-width="1.8">
<path d="M456.4 630.9 H445.9 V613.9 H464 V623.4"/>
<path d="M453.1 618.8 H460.2 M453.1 622.7 H460.2 M453.1 626.6 H457.3" stroke-width="1.6"/>
<path d="M449.6 618.8 H451.8 M449.6 622.7 H451.8 M449.6 626.6 H451.8" stroke-width="1.6"/>
<circle cx="463.5" cy="631" r="5.1" stroke-width="1.9"/>
<path d="M463.5 628.1 V633.9 M460.6 631 H466.4" stroke-width="2"/>
</g>
<!-- view more chevron -->
<path d="M240.4 681.6 L248.3 689.3 L256.2 681.6" stroke="#0b50d5" stroke-width="2"/>
<!-- views count help -->
<circle cx="569.9" cy="800.5" r="8.45" stroke="#0b50d5" stroke-width="2.1"/>
<text x="570.1" y="805.7" text-anchor="middle" font-family="Liberation Sans" font-weight="bold" font-size="14.2" fill="#0b50d5">?</text>
<!-- view all metrics chevron -->
<path d="M785.6 773.7 L793.3 781.1 L785.6 788.5" stroke="#0b50d5" stroke-width="1.9"/>
<!-- full text / export chevrons -->
<path d="M585.6 868.9 L593.5 876.6 L601.4 868.9" stroke="#0b50d5" stroke-width="2"/>
<path d="M698.5 868.9 L706.4 876.6 L714.3 868.9" stroke="#0b50d5" stroke-width="2"/>
<!-- set citation alert chevron -->
<path d="M1529.4 360 L1534.8 365.7 L1529.4 371.4" stroke="#0b50d5" stroke-width="1.5"/>
</svg>


<span class="t s" style="left:136.82px;top:32.00px;font-size:27px;line-height:36px;letter-spacing:0.000px;color:#f4691f;transform:scaleX(0.9813);">Scopus</span>
<span class="t s" style="left:1240.40px;top:40.00px;font-size:21.5px;line-height:28px;letter-spacing:0.000px;color:#2e2e2e;transform:scaleX(1.0422);">Search</span>
<span class="t s" style="left:1352.70px;top:40.00px;font-size:21.5px;line-height:28px;letter-spacing:0.000px;color:#2e2e2e;transform:scaleX(1.0202);">Sources</span>
<span class="t s" style="left:1474.00px;top:40.00px;font-size:21.5px;line-height:28px;letter-spacing:-0.000px;color:#2e2e2e;transform:scaleX(1.0535);">SciVal</span>
<span class="t s" style="left:1818.70px;top:39.00px;font-size:21.5px;line-height:28px;letter-spacing:0.000px;color:#ffffff;transform:scaleX(1.0450);font-weight:bold;">ZH</span>
<span class="t s" style="left:136.54px;top:169.00px;font-size:17px;line-height:23px;letter-spacing:0.338px;color:#0b50d5;transform:scaleX(1.0600);">Back to results</span>
<span class="t s" style="left:284.84px;top:169.00px;font-size:17px;line-height:23px;letter-spacing:0.000px;color:#2e2e2e;transform:scaleX(0.9625);">1</span>
<span class="t s" style="left:304.20px;top:169.00px;font-size:17px;line-height:23px;letter-spacing:0.923px;color:#2e2e2e;transform:scaleX(1.0600);">of</span>
<span class="t s" style="left:329.89px;top:169.00px;font-size:17px;line-height:23px;letter-spacing:0.000px;color:#2e2e2e;transform:scaleX(0.9125);">1</span>
<span class="t s" style="left:155.64px;top:225.00px;font-size:17px;line-height:23px;letter-spacing:0.755px;color:#0b50d5;transform:scaleX(1.0600);">Download</span>
<span class="t s" style="left:295.24px;top:225.00px;font-size:17px;line-height:23px;letter-spacing:0.569px;color:#0b50d5;transform:scaleX(1.0600);">Print</span>
<span class="t s" style="left:382.50px;top:225.00px;font-size:17px;line-height:23px;letter-spacing:-0.000px;color:#0b50d5;transform:scaleX(1.0262);">Save to PDF</span>
<span class="t s" style="left:536.00px;top:225.00px;font-size:17px;line-height:23px;letter-spacing:0.109px;color:#0b50d5;transform:scaleX(1.0600);">Save to list</span>
<span class="t s" style="left:678.20px;top:225.00px;font-size:17px;line-height:23px;letter-spacing:0.477px;color:#c2c2c2;transform:scaleX(1.0600);">Create bibliography</span>
<span class="t s" style="left:445.86px;top:284.00px;font-size:16px;line-height:21px;letter-spacing:0.018px;color:#2e2e2e;transform:scaleX(1.0600);font-weight:bold;font-style:italic;">2021 3rd International Sustainability and Resilience Conference: Climate Change</span>
<span class="t s" style="left:1124.16px;top:284.00px;font-size:15px;line-height:21px;letter-spacing:-0.000px;color:#2e2e2e;transform:scaleX(1.0373);">Pages 456 - 459</span>
<span class="t s" style="left:1266.10px;top:284.00px;font-size:15px;line-height:21px;letter-spacing:0.000px;color:#2e2e2e;transform:scaleX(0.9659);">2021</span>
<span class="t s" style="left:1325.70px;top:284.00px;font-size:15px;line-height:21px;letter-spacing:0.000px;color:#2e2e2e;transform:scaleX(1.0545);">3rd</span>
<span class="t s" style="left:443.94px;top:314.00px;font-size:15px;line-height:21px;letter-spacing:0.181px;color:#2e2e2e;transform:scaleX(1.0600);">International Sustainability and Resilience Conference: Climate Change, ISRC 2021</span>
<span class="t s" style="left:1076.70px;top:314.00px;font-size:15px;line-height:21px;letter-spacing:0.464px;color:#2e2e2e;transform:scaleX(1.0600);">Virtual, Online</span>
<span class="t s" style="left:1209.24px;top:314.00px;font-size:15px;line-height:21px;letter-spacing:0.010px;color:#2e2e2e;transform:scaleX(1.0600);">15 November</span>
<span class="t s" style="left:445.00px;top:344.00px;font-size:15px;line-height:21px;letter-spacing:0.000px;color:#2e2e2e;transform:scaleX(1.0536);">2021through 17 November 2021</span>
<span class="t s" style="left:699.60px;top:344.00px;font-size:15px;line-height:21px;letter-spacing:0.000px;color:#2e2e2e;transform:scaleX(0.9973);">Code 176395</span>
<span class="t sf" style="left:444.94px;top:410.00px;font-size:38px;line-height:50px;letter-spacing:0.101px;color:#2e2e2e;transform:scaleX(1.0600);-webkit-text-stroke:0.35px #2e2e2e;">Investigation of a novel drying technique in tableware</span>
<span class="t sf" style="left:446.00px;top:463.00px;font-size:38px;line-height:50px;letter-spacing:0.236px;color:#2e2e2e;transform:scaleX(1.0600);-webkit-text-stroke:0.35px #2e2e2e;">production process</span>
<span class="t s" style="left:443.74px;top:541.00px;font-size:16.5px;line-height:22px;letter-spacing:0.628px;color:#2e2e2e;transform:scaleX(1.0600);">Hassan, Haneen</span>
<span class="t s" style="left:625.00px;top:541.00px;font-size:16.5px;line-height:22px;letter-spacing:0.000px;color:#2e2e2e;">;</span>
<span class="t s" style="left:650.04px;top:541.00px;font-size:16.5px;line-height:22px;letter-spacing:0.450px;color:#2e2e2e;transform:scaleX(1.0600);">Elhady, Sherifa</span>
<span class="t s" style="left:817.80px;top:541.00px;font-size:16.5px;line-height:22px;letter-spacing:0.000px;color:#2e2e2e;">;</span>
<span class="t s" style="left:443.94px;top:584.00px;font-size:16.5px;line-height:22px;letter-spacing:0.508px;color:#2e2e2e;transform:scaleX(1.0600);">Fahim, Irene Samy</span>
<span class="t s" style="left:480.30px;top:614.00px;font-size:16.5px;line-height:22px;letter-spacing:0.609px;color:#2e2e2e;transform:scaleX(1.0600);">Save all to author list</span>
<span class="t s" style="left:445.10px;top:677.00px;font-size:12.5px;line-height:18px;letter-spacing:0.000px;color:#2e2e2e;transform:scaleX(1.0286);">a</span>
<span class="t s" style="left:455.94px;top:680.00px;font-size:16.5px;line-height:22px;letter-spacing:0.498px;color:#2e2e2e;transform:scaleX(1.0600);">Nile University, Industrial Engineering, Sesc, Cairo, Egypt</span>
<span class="t s" style="left:466.16px;top:749.00px;font-size:25px;line-height:34px;letter-spacing:0.000px;color:#2e2e2e;transform:scaleX(1.1417);">6</span>
<span class="t s" style="left:467.30px;top:789.00px;font-size:15px;line-height:21px;letter-spacing:0.121px;color:#2e2e2e;transform:scaleX(1.0600);">Views count</span>
<span class="t s" style="left:641.10px;top:770.00px;font-size:17px;line-height:23px;letter-spacing:0.553px;color:#0b50d5;transform:scaleX(1.0600);">View all metrics</span>
<span class="t s" style="left:439.44px;top:860.00px;font-size:17px;line-height:23px;letter-spacing:0.483px;color:#0b50d5;transform:scaleX(1.0600);">Full text options</span>
<span class="t s" style="left:632.64px;top:860.00px;font-size:17px;line-height:23px;letter-spacing:0.375px;color:#0b50d5;transform:scaleX(1.0600);">Export</span>
<span class="t s" style="left:139.36px;top:421.00px;font-size:15px;line-height:21px;letter-spacing:0.000px;color:#2e2e2e;transform:scaleX(1.0448);font-weight:bold;">Document type</span>
<span class="t s" style="left:140.40px;top:449.00px;font-size:15px;line-height:21px;letter-spacing:0.022px;color:#2e2e2e;transform:scaleX(1.0600);">Conference Paper</span>
<span class="t s" style="left:140.40px;top:484.00px;font-size:15px;line-height:21px;letter-spacing:0.000px;color:#2e2e2e;transform:scaleX(0.9904);font-weight:bold;">Source type</span>
<span class="t s" style="left:140.40px;top:511.00px;font-size:15px;line-height:21px;letter-spacing:0.064px;color:#2e2e2e;transform:scaleX(1.0600);">Conference Proceedings</span>
<span class="t s" style="left:139.18px;top:546.00px;font-size:15px;line-height:21px;letter-spacing:0.000px;color:#2e2e2e;transform:scaleX(1.0234);font-weight:bold;">ISBN</span>
<span class="t s" style="left:140.20px;top:574.00px;font-size:15px;line-height:21px;letter-spacing:-0.000px;color:#2e2e2e;transform:scaleX(1.0203);">978-166541632-0</span>
<span class="t s" style="left:139.14px;top:608.00px;font-size:15px;line-height:21px;letter-spacing:0.741px;color:#2e2e2e;transform:scaleX(1.0600);font-weight:bold;">DOI</span>
<span class="t s" style="left:139.40px;top:636.00px;font-size:15px;line-height:21px;letter-spacing:0.000px;color:#2e2e2e;transform:scaleX(0.9966);">10.1109/IEEECONF53624.2021.9667975</span>
<span class="t s" style="left:140.20px;top:673.00px;font-size:17px;line-height:23px;letter-spacing:0.435px;color:#0b50d5;transform:scaleX(1.0600);">View more</span>
<span class="t s" style="left:1389.14px;top:187.00px;font-size:22px;line-height:29px;letter-spacing:0.040px;color:#2e2e2e;transform:scaleX(1.0600);">Cited by 0 documents</span>
<span class="t s" style="left:1389.14px;top:261.00px;font-size:17px;line-height:23px;letter-spacing:0.555px;color:#2e2e2e;transform:scaleX(1.0600);">Inform me when this document is cited in</span>
<span class="t s" style="left:1390.20px;top:291.00px;font-size:17px;line-height:23px;letter-spacing:0.000px;color:#2e2e2e;transform:scaleX(1.0428);">Scopus:</span>
<span class="t s" style="left:1402.00px;top:356.00px;font-size:15.5px;line-height:21px;letter-spacing:0.181px;color:#2e2e2e;transform:scaleX(1.0600);">Set citation alert</span>
<span class="t s" style="left:1389.64px;top:460.00px;font-size:21px;line-height:29px;letter-spacing:0.660px;color:#2e2e2e;transform:scaleX(1.0600);">Related documents</span>
<span class="t s" style="left:1389.54px;top:515.00px;font-size:16.5px;line-height:22px;letter-spacing:0.557px;color:#0b50d5;transform:scaleX(1.0600);">Production of Single-Use Tableware</span>
<span class="t s" style="left:1389.54px;top:545.00px;font-size:16.5px;line-height:22px;letter-spacing:0.574px;color:#0b50d5;transform:scaleX(1.0600);">Products from Bagasse</span>
<span class="t s" style="left:1389.54px;top:585.00px;font-size:16.5px;line-height:22px;letter-spacing:0.132px;color:#737373;transform:scaleX(1.0600);">Elhady, S. , Fahim, I.S.</span>
<span class="t s" style="left:1390.40px;top:615.00px;font-size:16.5px;line-height:22px;letter-spacing:0.082px;color:#2e2e2e;transform:scaleX(1.0600);font-style:italic;">(2021) NILES 2021 - 3rd Novel Intelligent and</span>
<span class="t s" style="left:1390.40px;top:645.00px;font-size:16.5px;line-height:22px;letter-spacing:0.025px;color:#2e2e2e;transform:scaleX(1.0600);font-style:italic;">Leading Emerging Sciences Conference,</span>
<span class="t s" style="left:1390.40px;top:675.00px;font-size:16.5px;line-height:22px;letter-spacing:0.000px;color:#2e2e2e;transform:scaleX(1.0582);font-style:italic;">Proceedings</span>
<span class="t s" style="left:1389.24px;top:725.00px;font-size:16.5px;line-height:22px;letter-spacing:0.698px;color:#0b50d5;transform:scaleX(1.0600);">Lab to Industry</span>
<span class="t s" style="left:1389.24px;top:765.00px;font-size:16.5px;line-height:22px;letter-spacing:0.201px;color:#737373;transform:scaleX(1.0600);">Hassan, H. , Elhussieny, A. , Fahim, I.S.</span>
<span class="t s" style="left:1390.30px;top:795.00px;font-size:16.5px;line-height:22px;letter-spacing:0.021px;color:#2e2e2e;transform:scaleX(1.0600);font-style:italic;">(2024) Chemical Physics of Polymer</span>
<span class="t s" style="left:1390.30px;top:825.00px;font-size:16.5px;line-height:22px;letter-spacing:0.305px;color:#2e2e2e;transform:scaleX(1.0600);font-style:italic;">Nanocomposites: Processing, Morphology,</span>
<span class="t s" style="left:1390.30px;top:855.00px;font-size:16.5px;line-height:22px;letter-spacing:0.276px;color:#2e2e2e;transform:scaleX(1.0600);font-style:italic;">Structure, Thermodynamics, Rheology:</span>
<span class="t s" style="left:1389.24px;top:885.00px;font-size:16.5px;line-height:22px;letter-spacing:0.863px;color:#2e2e2e;transform:scaleX(1.0600);font-style:italic;">Volume III</span>
</body>
</html>
